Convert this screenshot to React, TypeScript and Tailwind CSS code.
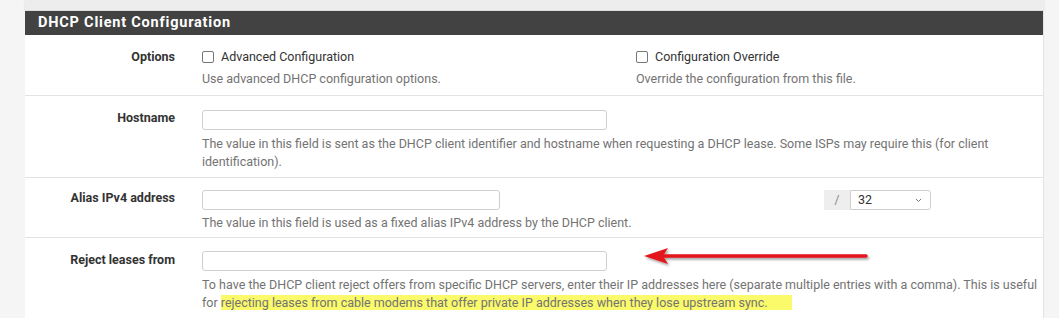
import type { ReactNode } from "react";

function Checkbox() {
  return (
    <span className="inline-block w-[12px] h-[12px] rounded-[2px] border border-[#767676] bg-white shrink-0" />
  );
}

function TextInput({ width }: { width: string }) {
  return (
    <div className={`h-[20px] ${width} rounded-[3px] border border-[#cfcfcf] bg-white`} />
  );
}

function Row({
  label,
  className,
  children,
}: {
  label: string;
  className: string;
  children: ReactNode;
}) {
  return (
    <div className={`flex border-b border-[#e3e3e3] ${className}`}>
      <div className="w-[177px] shrink-0 pr-[27px] text-right font-bold text-[#333] leading-[18px]">
        {label}
      </div>
      <div className="flex-1">{children}</div>
    </div>
  );
}

export default function App() {
  return (
    <div
      className="relative w-[1059px] h-[318px] overflow-hidden bg-[#f5f5f5] text-[12.5px]"
      style={{ fontFamily: "Roboto, 'Liberation Sans', sans-serif" }}
    >
      <div className="ml-[25px] w-[1019px]">
        {/* bottom of the previous panel */}
        <div className="h-[10px] bg-[#ededed] shadow-[0_1px_2px_rgba(0,0,0,0.14)]" />
        <div className="h-[1px]" />

        <div className="bg-white border-r border-[#e3e3e3]">
          <div className="h-[24px] bg-[#424242] pl-[13px] flex items-center">
            <h2 className="text-white font-bold text-[14.5px] tracking-[0.8px]">
              DHCP Client Configuration
            </h2>
          </div>

          {/* Options */}
          <Row label="Options" className="pt-[13px] pb-[7px]">
            <div className="flex">
              <div className="w-[434px]">
                <label className="flex items-center gap-[7px] h-[18px] text-[#333]">
                  <Checkbox />
                  Advanced Configuration
                </label>
                <p className="mt-[4px] leading-[18px] text-[#737373]">
                  Use advanced DHCP configuration options.
                </p>
              </div>
              <div>
                <label className="flex items-center gap-[7px] h-[18px] text-[#333]">
                  <Checkbox />
                  Configuration Override
                </label>
                <p className="mt-[4px] leading-[18px] text-[#737373]">
                  Override the configuration from this file.
                </p>
              </div>
            </div>
          </Row>

          {/* Hostname */}
          <Row label="Hostname" className="pt-[13px] pb-[6px]">
            <div className="pt-[1px]">
              <TextInput width="w-[405px]" />
              <p className="mt-[5px] leading-[18px] text-[#737373] whitespace-nowrap">
                The value in this field is sent as the DHCP client identifier and hostname when
                requesting a DHCP lease. Some ISPs may require this (for client
                <br />
                identification).
              </p>
            </div>
          </Row>

          {/* Alias IPv4 */}
          <Row label="Alias IPv4 address" className="pt-[11px] pb-[5px]">
            <div className="pt-[1px]">
              <div className="flex items-center">
                <TextInput width="w-[298px]" />
                <div className="ml-[324px] flex h-[20px]">
                  <div className="w-[26px] bg-[#eeeeee] flex items-center justify-center text-[#888] text-[12px]">
                    /
                  </div>
                  <div className="w-[81px] border border-[#cfcfcf] rounded-r-[3px] flex items-center justify-between pl-[7px] pr-[8px] text-[#333]">
                    <span>32</span>
                    <svg width="7" height="5" viewBox="0 0 7 5">
                      <polyline
                        points="1,1 3.5,3.5 6,1"
                        fill="none"
                        stroke="#777"
                        strokeWidth="1"
                      />
                    </svg>
                  </div>
                </div>
              </div>
              <p className="mt-[4px] leading-[18px] text-[#737373]">
                The value in this field is used as a fixed alias IPv4 address by the DHCP client.
              </p>
            </div>
          </Row>

          {/* Reject leases */}
          <Row label="Reject leases from" className="pt-[13px] pb-[8px]">
            <div>
              <TextInput width="w-[405px]" />
              <p className="mt-[5px] leading-[18px] text-[#737373] whitespace-nowrap">
                To have the DHCP client reject offers from specific DHCP servers, enter their IP
                addresses here (separate multiple entries with a comma). This is useful
                <br />
                for{" "}
                <span className="bg-[#fafa6a] pr-[24px]">
                  rejecting leases from cable modems that offer private IP addresses when they
                  lose upstream sync.
                </span>
              </p>
            </div>
          </Row>
        </div>
      </div>

      {/* red annotation arrow */}
      <svg
        className="absolute left-[638px] top-[242px]"
        width="240"
        height="30"
        viewBox="0 0 240 30"
      >
        <defs>
          <filter id="sh" x="-10%" y="-50%" width="120%" height="200%">
            <feDropShadow dx="1.5" dy="2" stdDeviation="1.3" floodColor="#000" floodOpacity="0.35" />
          </filter>
        </defs>
        <g filter="url(#sh)">
          <line
            x1="26"
            y1="14"
            x2="228"
            y2="14"
            stroke="#e3151d"
            strokeWidth="3.5"
            strokeLinecap="round"
          />
          <polygon points="6,14 30,6 25,14 30,22" fill="#e3151d" />
        </g>
      </svg>
    </div>
  );
}
